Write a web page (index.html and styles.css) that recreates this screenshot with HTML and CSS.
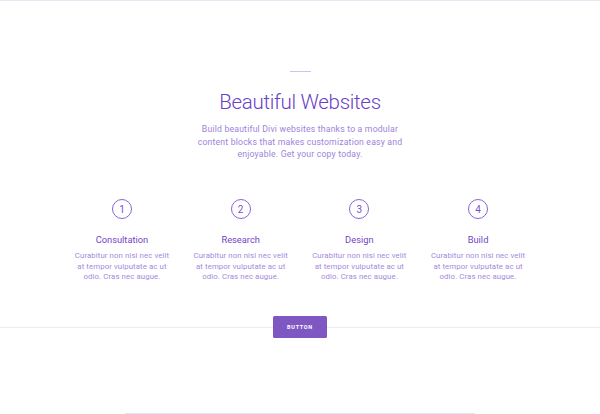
FILE: index.html
```html
<!DOCTYPE html>
<html>
<head>
<meta charset="utf-8">
<link rel="stylesheet" href="styles.css">
</head>
<body>
<div class="page">
  <section class="hero">
    <div class="divider"></div>
    <h1 class="title">Beautiful Websites</h1>
    <p class="lead">Build beautiful Divi websites thanks to a modular content blocks that makes customization easy and enjoyable. Get your copy today.</p>
  </section>
  <section class="steps">
    <div class="step">
      <div class="num">1</div>
      <h3 class="step-title">Consultation</h3>
      <p class="step-text">Curabitur non nisi nec velit at tempor vulputate ac ut odio. Cras nec augue.</p>
    </div>
    <div class="step">
      <div class="num">2</div>
      <h3 class="step-title">Research</h3>
      <p class="step-text">Curabitur non nisi nec velit at tempor vulputate ac ut odio. Cras nec augue.</p>
    </div>
    <div class="step">
      <div class="num">3</div>
      <h3 class="step-title">Design</h3>
      <p class="step-text">Curabitur non nisi nec velit at tempor vulputate ac ut odio. Cras nec augue.</p>
    </div>
    <div class="step">
      <div class="num">4</div>
      <h3 class="step-title">Build</h3>
      <p class="step-text">Curabitur non nisi nec velit at tempor vulputate ac ut odio. Cras nec augue.</p>
    </div>
  </section>
  <div class="cta">
    <a class="button" href="#">Button</a>
  </div>
  <div class="footer-line"></div>
</div>
</body>
</html>
```
FILE: styles.css
```css
html, body {
  margin: 0;
  padding: 0;
  background: #ffffff;
}
body {
  font-family: Roboto, "Liberation Sans", sans-serif;
  height: 414px;
  overflow: hidden;
}
.page {
  border-top: 1px solid #ebe8f5;
  display: flex;
  flex-direction: column;
  align-items: center;
}
.hero {
  display: flex;
  flex-direction: column;
  align-items: center;
  padding-top: 70px;
}
.divider {
  width: 21px;
  height: 1px;
  background: #cfc2ec;
}
.title {
  margin: 16px 0 0;
  font-size: 20.5px;
  line-height: 28px;
  font-weight: 300;
  color: #6a40c6;
  letter-spacing: -0.3px;
}
.lead {
  margin: 7px 0 0;
  width: 206px;
  text-align: center;
  font-size: 8.7px;
  line-height: 12.5px;
  letter-spacing: 0.18px;
  color: #9d84da;
}
.steps {
  margin-top: 38.5px;
  display: grid;
  grid-template-columns: repeat(4, 100px);
  column-gap: 18.7px;
  justify-content: center;
}
.step {
  display: flex;
  flex-direction: column;
  align-items: center;
}
.num {
  width: 18px;
  height: 18px;
  border: 1.3px solid #8c64d4;
  border-radius: 50%;
  display: flex;
  align-items: center;
  justify-content: center;
  font-size: 10px;
  color: #7a50cc;
}
.step-title {
  margin: 14px 0 0;
  font-size: 9.3px;
  line-height: 13px;
  font-weight: 400;
  color: #7145c9;
}
.step-text {
  margin: 5px 0 0;
  text-align: center;
  font-size: 7.8px;
  line-height: 10.5px;
  letter-spacing: 0.1px;
  color: #a58ade;
}
.cta {
  align-self: stretch;
  margin-top: 33px;
  height: 22px;
  display: flex;
  justify-content: center;
  background: linear-gradient(#ffffff 0, #ffffff 10.5px, #ecebf6 10.5px, #ecebf6 12px, #ffffff 12px);
}
.button {
  width: 54px;
  height: 22px;
  border-radius: 1.5px;
  background: #7f57c3;
  color: #ffffff;
  text-decoration: none;
  text-transform: uppercase;
  font-size: 5.5px;
  font-weight: 700;
  letter-spacing: 0.7px;
  display: flex;
  align-items: center;
  justify-content: center;
}
.footer-line {
  margin-top: 75px;
  width: 350px;
  height: 1px;
  background: #e4e2ee;
}
```
